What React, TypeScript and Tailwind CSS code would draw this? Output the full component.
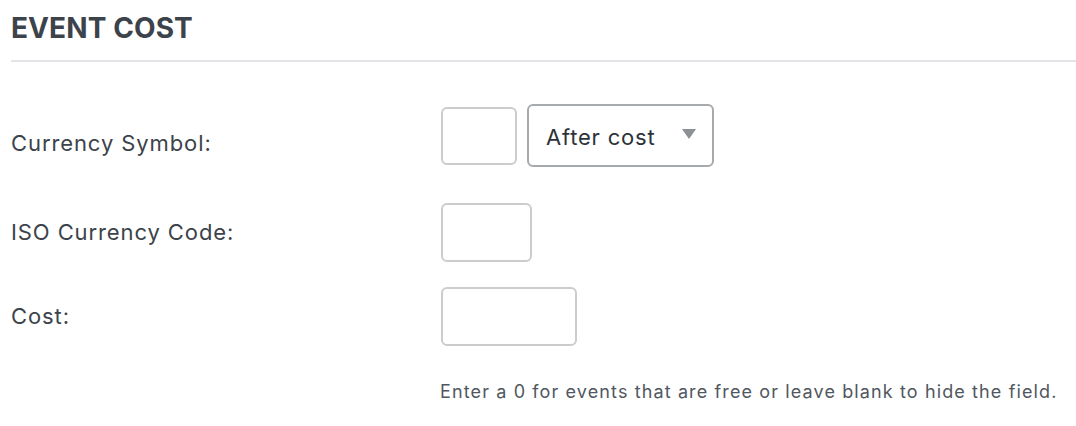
import React from "react";

const font = { fontFamily: "Inter, 'Helvetica Neue', Arial, sans-serif" };

// Row: label column on the left, controls on the right
const Row = ({ label, children, className = "", labelClass = "" }: { label: string; children: React.ReactNode; className?: string; labelClass?: string }) => (
  <div className={`flex items-center ${className}`}>
    <div className={`w-[430px] text-[22px] tracking-[0.9px] text-[#3c434a] ${labelClass}`}>{label}</div>
    <div className="flex items-center gap-[10px]">{children}</div>
  </div>
);

export default function App() {
  return (
    <div className="w-[1076px] h-[426px] bg-white pl-[11px] overflow-hidden" style={font}>
      <h2 className="pt-[11px] text-[28px] leading-[34px] font-bold text-[#3c434a] tracking-[0.1px]">EVENT COST</h2>
      <div className="mt-[15px] h-[2px] bg-[#e2e4e7]" />

      <Row label="Currency Symbol:" className="mt-[42px] h-[63px]" labelClass="pt-[16px]">
        <input className="w-[76px] h-[58px] border-2 border-[#cccccc] rounded-[6px] outline-none" />
        <div className="relative w-[187px] h-[63px] border-2 border-[#a7aaad] rounded-[6px] flex items-center pl-[17px] pt-[4px] text-[22px] tracking-[0.8px] text-[#2c3338]">
          After cost
          <svg className="absolute right-[16px] top-[23px]" width="14" height="11" viewBox="0 0 14 11">
            <path d="M0 0 L14 0 L7 10 Z" fill="#8c8f94" />
          </svg>
        </div>
      </Row>

      <Row label="ISO Currency Code:" className="mt-[36px] h-[59px]">
        <input className="w-[91px] h-[59px] border-2 border-[#cccccc] rounded-[6px] outline-none" />
      </Row>

      <Row label="Cost:" className="mt-[25px] h-[59px]">
        <input className="w-[136px] h-[59px] border-2 border-[#cccccc] rounded-[6px] outline-none" />
      </Row>

      <p className="ml-[429px] mt-[32px] text-[18px] tracking-[1.12px] text-[#50575e]">
        Enter a 0 for events that are free or leave blank to hide the field.
      </p>
    </div>
  );
}
